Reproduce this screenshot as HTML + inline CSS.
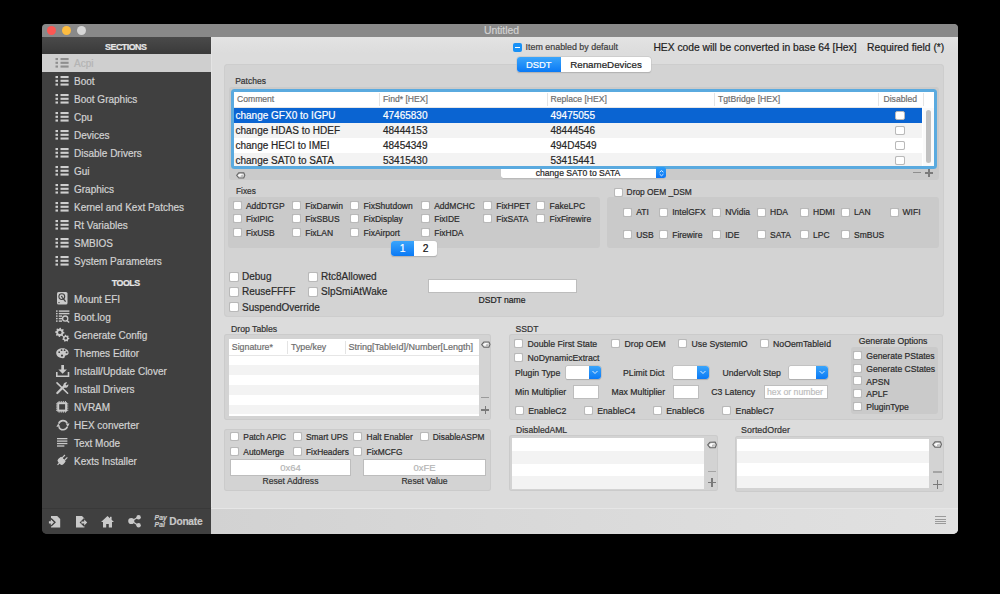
<!DOCTYPE html><html><head><meta charset="utf-8"><style>
*{margin:0;padding:0;box-sizing:content-box}
html,body{width:1000px;height:594px;background:#000;overflow:hidden;position:relative;font-family:"Liberation Sans",sans-serif}
body div{position:absolute}
.t{white-space:nowrap;font-family:"Liberation Sans",sans-serif;-webkit-text-stroke:0.2px currentColor}
.cb{background:#fff;border:1px solid #b9b9b9;border-radius:2px;box-shadow:0 0 0.5px rgba(0,0,0,.2)}
</style></head><body><div style="left:42px;top:24px;width:916px;height:510px;background:linear-gradient(to right,#404040 0,#404040 168px,#dcdcdc 168px);border-radius:5px;overflow:hidden"></div>
<div style="left:42px;top:24px;width:916px;height:13.4px;background:#898989;border-radius:0px;border-radius:4px 4px 0 0"></div>
<div style="left:47.2px;top:26.2px;width:9px;height:9px;border-radius:50%;background:#fc5753"></div>
<div style="left:62.2px;top:26.2px;width:9px;height:9px;border-radius:50%;background:#fdbc40"></div>
<div style="left:77.2px;top:26.2px;width:9px;height:9px;border-radius:50%;background:#d6d6d6"></div>
<div class="t" style="left:351.5px;top:24.3px;width:300px;text-align:center;line-height:14px;font-size:10.4px;color:#d2d2d2;font-weight:400;">Untitled</div>
<div style="left:42px;top:37px;width:168.7px;height:497px;background:#404040;border-radius:0px;border-radius:0 0 0 5px"></div>
<div style="left:42px;top:37.2px;width:168.7px;height:16.8px;background:linear-gradient(#4a4a4a,#3a3a3a);border-radius:0px;border-radius:3px 0 0 0"></div>
<div class="t" style="left:-24.25px;top:40.1px;width:300px;text-align:center;line-height:14px;font-size:8.9px;color:#e6e6e6;font-weight:700;letter-spacing:-0.5px">SECTIONS</div>
<div style="left:42px;top:54px;width:168.7px;height:18px;background:#cfcfcf;border-radius:0px;"></div>
<svg style="position:absolute;left:55.3px;top:58.1px" width="14" height="10"><rect x="0.5" y="0.0" width="2.5" height="2.1" fill="#8e8e8e"/><rect x="5.5" y="0.0" width="8.1" height="2.1" fill="#8e8e8e"/><rect x="0.5" y="3.75" width="2.5" height="2.1" fill="#8e8e8e"/><rect x="5.5" y="3.75" width="8.1" height="2.1" fill="#8e8e8e"/><rect x="0.5" y="7.5" width="2.5" height="2.1" fill="#8e8e8e"/><rect x="5.5" y="7.5" width="8.1" height="2.1" fill="#8e8e8e"/></svg>
<div class="t" style="left:74px;top:56.8px;line-height:14px;font-size:10px;color:#b4b4b4;font-weight:400;">Acpi</div>
<svg style="position:absolute;left:55.3px;top:76.1px" width="14" height="10"><rect x="0.5" y="0.0" width="2.5" height="2.1" fill="#cfcfcf"/><rect x="5.5" y="0.0" width="8.1" height="2.1" fill="#cfcfcf"/><rect x="0.5" y="3.75" width="2.5" height="2.1" fill="#cfcfcf"/><rect x="5.5" y="3.75" width="8.1" height="2.1" fill="#cfcfcf"/><rect x="0.5" y="7.5" width="2.5" height="2.1" fill="#cfcfcf"/><rect x="5.5" y="7.5" width="8.1" height="2.1" fill="#cfcfcf"/></svg>
<div class="t" style="left:74px;top:74.8px;line-height:14px;font-size:10px;color:#d2d2d2;font-weight:400;">Boot</div>
<svg style="position:absolute;left:55.3px;top:94.1px" width="14" height="10"><rect x="0.5" y="0.0" width="2.5" height="2.1" fill="#cfcfcf"/><rect x="5.5" y="0.0" width="8.1" height="2.1" fill="#cfcfcf"/><rect x="0.5" y="3.75" width="2.5" height="2.1" fill="#cfcfcf"/><rect x="5.5" y="3.75" width="8.1" height="2.1" fill="#cfcfcf"/><rect x="0.5" y="7.5" width="2.5" height="2.1" fill="#cfcfcf"/><rect x="5.5" y="7.5" width="8.1" height="2.1" fill="#cfcfcf"/></svg>
<div class="t" style="left:74px;top:92.8px;line-height:14px;font-size:10px;color:#d2d2d2;font-weight:400;">Boot Graphics</div>
<svg style="position:absolute;left:55.3px;top:112.1px" width="14" height="10"><rect x="0.5" y="0.0" width="2.5" height="2.1" fill="#cfcfcf"/><rect x="5.5" y="0.0" width="8.1" height="2.1" fill="#cfcfcf"/><rect x="0.5" y="3.75" width="2.5" height="2.1" fill="#cfcfcf"/><rect x="5.5" y="3.75" width="8.1" height="2.1" fill="#cfcfcf"/><rect x="0.5" y="7.5" width="2.5" height="2.1" fill="#cfcfcf"/><rect x="5.5" y="7.5" width="8.1" height="2.1" fill="#cfcfcf"/></svg>
<div class="t" style="left:74px;top:110.8px;line-height:14px;font-size:10px;color:#d2d2d2;font-weight:400;">Cpu</div>
<svg style="position:absolute;left:55.3px;top:130.1px" width="14" height="10"><rect x="0.5" y="0.0" width="2.5" height="2.1" fill="#cfcfcf"/><rect x="5.5" y="0.0" width="8.1" height="2.1" fill="#cfcfcf"/><rect x="0.5" y="3.75" width="2.5" height="2.1" fill="#cfcfcf"/><rect x="5.5" y="3.75" width="8.1" height="2.1" fill="#cfcfcf"/><rect x="0.5" y="7.5" width="2.5" height="2.1" fill="#cfcfcf"/><rect x="5.5" y="7.5" width="8.1" height="2.1" fill="#cfcfcf"/></svg>
<div class="t" style="left:74px;top:128.8px;line-height:14px;font-size:10px;color:#d2d2d2;font-weight:400;">Devices</div>
<svg style="position:absolute;left:55.3px;top:148.1px" width="14" height="10"><rect x="0.5" y="0.0" width="2.5" height="2.1" fill="#cfcfcf"/><rect x="5.5" y="0.0" width="8.1" height="2.1" fill="#cfcfcf"/><rect x="0.5" y="3.75" width="2.5" height="2.1" fill="#cfcfcf"/><rect x="5.5" y="3.75" width="8.1" height="2.1" fill="#cfcfcf"/><rect x="0.5" y="7.5" width="2.5" height="2.1" fill="#cfcfcf"/><rect x="5.5" y="7.5" width="8.1" height="2.1" fill="#cfcfcf"/></svg>
<div class="t" style="left:74px;top:146.8px;line-height:14px;font-size:10px;color:#d2d2d2;font-weight:400;">Disable Drivers</div>
<svg style="position:absolute;left:55.3px;top:166.1px" width="14" height="10"><rect x="0.5" y="0.0" width="2.5" height="2.1" fill="#cfcfcf"/><rect x="5.5" y="0.0" width="8.1" height="2.1" fill="#cfcfcf"/><rect x="0.5" y="3.75" width="2.5" height="2.1" fill="#cfcfcf"/><rect x="5.5" y="3.75" width="8.1" height="2.1" fill="#cfcfcf"/><rect x="0.5" y="7.5" width="2.5" height="2.1" fill="#cfcfcf"/><rect x="5.5" y="7.5" width="8.1" height="2.1" fill="#cfcfcf"/></svg>
<div class="t" style="left:74px;top:164.8px;line-height:14px;font-size:10px;color:#d2d2d2;font-weight:400;">Gui</div>
<svg style="position:absolute;left:55.3px;top:184.1px" width="14" height="10"><rect x="0.5" y="0.0" width="2.5" height="2.1" fill="#cfcfcf"/><rect x="5.5" y="0.0" width="8.1" height="2.1" fill="#cfcfcf"/><rect x="0.5" y="3.75" width="2.5" height="2.1" fill="#cfcfcf"/><rect x="5.5" y="3.75" width="8.1" height="2.1" fill="#cfcfcf"/><rect x="0.5" y="7.5" width="2.5" height="2.1" fill="#cfcfcf"/><rect x="5.5" y="7.5" width="8.1" height="2.1" fill="#cfcfcf"/></svg>
<div class="t" style="left:74px;top:182.8px;line-height:14px;font-size:10px;color:#d2d2d2;font-weight:400;">Graphics</div>
<svg style="position:absolute;left:55.3px;top:202.1px" width="14" height="10"><rect x="0.5" y="0.0" width="2.5" height="2.1" fill="#cfcfcf"/><rect x="5.5" y="0.0" width="8.1" height="2.1" fill="#cfcfcf"/><rect x="0.5" y="3.75" width="2.5" height="2.1" fill="#cfcfcf"/><rect x="5.5" y="3.75" width="8.1" height="2.1" fill="#cfcfcf"/><rect x="0.5" y="7.5" width="2.5" height="2.1" fill="#cfcfcf"/><rect x="5.5" y="7.5" width="8.1" height="2.1" fill="#cfcfcf"/></svg>
<div class="t" style="left:74px;top:200.8px;line-height:14px;font-size:10px;color:#d2d2d2;font-weight:400;">Kernel and Kext Patches</div>
<svg style="position:absolute;left:55.3px;top:220.1px" width="14" height="10"><rect x="0.5" y="0.0" width="2.5" height="2.1" fill="#cfcfcf"/><rect x="5.5" y="0.0" width="8.1" height="2.1" fill="#cfcfcf"/><rect x="0.5" y="3.75" width="2.5" height="2.1" fill="#cfcfcf"/><rect x="5.5" y="3.75" width="8.1" height="2.1" fill="#cfcfcf"/><rect x="0.5" y="7.5" width="2.5" height="2.1" fill="#cfcfcf"/><rect x="5.5" y="7.5" width="8.1" height="2.1" fill="#cfcfcf"/></svg>
<div class="t" style="left:74px;top:218.8px;line-height:14px;font-size:10px;color:#d2d2d2;font-weight:400;">Rt Variables</div>
<svg style="position:absolute;left:55.3px;top:238.1px" width="14" height="10"><rect x="0.5" y="0.0" width="2.5" height="2.1" fill="#cfcfcf"/><rect x="5.5" y="0.0" width="8.1" height="2.1" fill="#cfcfcf"/><rect x="0.5" y="3.75" width="2.5" height="2.1" fill="#cfcfcf"/><rect x="5.5" y="3.75" width="8.1" height="2.1" fill="#cfcfcf"/><rect x="0.5" y="7.5" width="2.5" height="2.1" fill="#cfcfcf"/><rect x="5.5" y="7.5" width="8.1" height="2.1" fill="#cfcfcf"/></svg>
<div class="t" style="left:74px;top:236.8px;line-height:14px;font-size:10px;color:#d2d2d2;font-weight:400;">SMBIOS</div>
<svg style="position:absolute;left:55.3px;top:256.1px" width="14" height="10"><rect x="0.5" y="0.0" width="2.5" height="2.1" fill="#cfcfcf"/><rect x="5.5" y="0.0" width="8.1" height="2.1" fill="#cfcfcf"/><rect x="0.5" y="3.75" width="2.5" height="2.1" fill="#cfcfcf"/><rect x="5.5" y="3.75" width="8.1" height="2.1" fill="#cfcfcf"/><rect x="0.5" y="7.5" width="2.5" height="2.1" fill="#cfcfcf"/><rect x="5.5" y="7.5" width="8.1" height="2.1" fill="#cfcfcf"/></svg>
<div class="t" style="left:74px;top:254.8px;line-height:14px;font-size:10px;color:#d2d2d2;font-weight:400;">System Parameters</div>
<div class="t" style="left:-24.25px;top:276.4px;width:300px;text-align:center;line-height:14px;font-size:8.9px;color:#e6e6e6;font-weight:700;letter-spacing:-0.5px">TOOLS</div>
<div class="t" style="left:74px;top:292.6px;line-height:14px;font-size:10px;color:#d2d2d2;font-weight:400;">Mount EFI</div>
<div class="t" style="left:74px;top:310.65px;line-height:14px;font-size:10px;color:#d2d2d2;font-weight:400;">Boot.log</div>
<div class="t" style="left:74px;top:328.7px;line-height:14px;font-size:10px;color:#d2d2d2;font-weight:400;">Generate Config</div>
<div class="t" style="left:74px;top:346.75px;line-height:14px;font-size:10px;color:#d2d2d2;font-weight:400;">Themes Editor</div>
<div class="t" style="left:74px;top:364.8px;line-height:14px;font-size:10px;color:#d2d2d2;font-weight:400;">Install/Update Clover</div>
<div class="t" style="left:74px;top:382.85px;line-height:14px;font-size:10px;color:#d2d2d2;font-weight:400;">Install Drivers</div>
<div class="t" style="left:74px;top:400.9px;line-height:14px;font-size:10px;color:#d2d2d2;font-weight:400;">NVRAM</div>
<div class="t" style="left:74px;top:418.95px;line-height:14px;font-size:10px;color:#d2d2d2;font-weight:400;">HEX converter</div>
<div class="t" style="left:74px;top:437.0px;line-height:14px;font-size:10px;color:#d2d2d2;font-weight:400;">Text Mode</div>
<div class="t" style="left:74px;top:455.05px;line-height:14px;font-size:10px;color:#d2d2d2;font-weight:400;">Kexts Installer</div>
<svg style="position:absolute;left:56.9px;top:292.2px;overflow:visible" width="10.5" height="12.5" viewBox="0 0 10.5 12.5"><rect x="0" y="0" width="10.5" height="12.5" rx="1.6" fill="#c9c9c9"/><circle cx="4.8" cy="4.6" r="2.9" fill="none" stroke="#404040" stroke-width="1.1"/><circle cx="4.8" cy="4.6" r="0.8" fill="#404040"/><path d="M5.2 5.4 L8.6 9.6" stroke="#404040" stroke-width="1.3"/><rect x="1.3" y="10.2" width="1.4" height="0.9" fill="#404040"/></svg>
<svg style="position:absolute;left:55.6px;top:309.8px;overflow:visible" width="13.4" height="12.5" viewBox="0 0 13.4 12.5"><rect x="0" y="0.4" width="1.6" height="1.4" fill="#c9c9c9"/><rect x="2.8" y="0.4" width="10.6" height="1.4" fill="#c9c9c9"/><rect x="0" y="2.9" width="1.6" height="1.4" fill="#c9c9c9"/><rect x="2.8" y="2.9" width="10.6" height="1.4" fill="#c9c9c9"/><rect x="0" y="5.4" width="1.6" height="1.4" fill="#c9c9c9"/><rect x="2.8" y="5.4" width="3.2" height="1.4" fill="#c9c9c9"/><rect x="0" y="7.9" width="1.6" height="1.4" fill="#c9c9c9"/><rect x="2.8" y="7.9" width="3.2" height="1.4" fill="#c9c9c9"/><rect x="0" y="10.4" width="1.6" height="1.4" fill="#c9c9c9"/><rect x="2.8" y="10.4" width="3.2" height="1.4" fill="#c9c9c9"/><circle cx="9.2" cy="8.6" r="2.6" fill="none" stroke="#c9c9c9" stroke-width="1.3"/><path d="M11 10.5 L13.2 12.5" stroke="#c9c9c9" stroke-width="1.5"/></svg>
<svg style="position:absolute;left:55px;top:327.6px;overflow:visible" width="14" height="14" viewBox="0 0 14 14"><polygon points="9.50,4.40 9.41,5.32 8.13,5.78 7.79,6.40 8.12,7.72 7.41,8.31 6.18,7.73 5.50,7.93 4.80,9.10 3.88,9.01 3.42,7.73 2.80,7.39 1.48,7.72 0.89,7.01 1.47,5.78 1.27,5.10 0.10,4.40 0.19,3.48 1.47,3.02 1.81,2.40 1.48,1.08 2.19,0.49 3.42,1.07 4.10,0.87 4.80,-0.30 5.72,-0.21 6.18,1.07 6.80,1.41 8.12,1.08 8.71,1.79 8.13,3.02 8.33,3.70" fill="#c9c9c9"/><circle cx="4.8" cy="4.4" r="1.7" fill="#404040"/><polygon points="14.40,10.30 14.31,11.10 13.23,11.47 12.91,11.98 13.04,13.11 12.36,13.54 11.40,12.93 10.80,13.00 10.00,13.81 9.24,13.54 9.12,12.41 8.69,11.98 7.56,11.86 7.29,11.10 8.10,10.30 8.17,9.70 7.56,8.74 7.99,8.06 9.12,8.19 9.63,7.87 10.00,6.79 10.80,6.70 11.40,7.67 11.97,7.87 13.04,7.49 13.61,8.06 13.23,9.13 13.43,9.70" fill="#c9c9c9"/><circle cx="10.8" cy="10.3" r="1.2" fill="#404040"/></svg>
<svg style="position:absolute;left:55.7px;top:347.6px;overflow:visible" width="12.8" height="10.2" viewBox="0 0 12.8 10.2"><path d="M6.6 0.2 C10.6 0.2 12.8 2.6 12.6 5 C12.4 7.4 10 7 9.2 7.8 C8.4 8.6 9.4 10 7.2 10.2 C3.4 10.4 0.2 8 0.2 5 C0.2 2.2 3 0.2 6.6 0.2 Z" fill="#c9c9c9"/><circle cx="3.2" cy="4.2" r="0.9" fill="#404040"/><circle cx="5.6" cy="2.2" r="0.9" fill="#404040"/><circle cx="8.6" cy="2.2" r="0.9" fill="#404040"/><circle cx="10.6" cy="4.4" r="0.9" fill="#404040"/><circle cx="6" cy="7.6" r="1.1" fill="#404040"/></svg>
<svg style="position:absolute;left:55.7px;top:364.8px;overflow:visible" width="13.3" height="12" viewBox="0 0 13.3 12"><rect x="5.3" y="0" width="2.7" height="5" fill="#c9c9c9"/><path d="M2.4 4.4 L10.9 4.4 L6.65 8.8 Z" fill="#c9c9c9"/><path d="M0.8 7 L0.8 11.2 L12.5 11.2 L12.5 7" fill="none" stroke="#c9c9c9" stroke-width="1.6"/></svg>
<svg style="position:absolute;left:55.7px;top:382.4px;overflow:visible" width="12.8" height="12" viewBox="0 0 12.8 12"><path d="M1 0.9 L11.6 11.2" stroke="#c9c9c9" stroke-width="1.6" stroke-linecap="round"/><path d="M1.3 11 L8 4.4" stroke="#c9c9c9" stroke-width="2.2" stroke-linecap="round"/><path d="M8.2 5.6 A3.1 3.1 0 0 1 11.2 0.4 L9.6 2.4 L10.4 3.6 L12.4 2.2 A3.1 3.1 0 0 1 8.2 5.6 Z" fill="#c9c9c9"/></svg>
<svg style="position:absolute;left:56.1px;top:400.7px;overflow:visible" width="12.3" height="11.7" viewBox="0 0 12.3 11.7"><rect x="2.2" y="2.2" width="7.9" height="7.4" fill="none" stroke="#c9c9c9" stroke-width="2"/><rect x="2.6" y="0" width="1" height="1.6" fill="#c9c9c9"/><rect x="2.6" y="10.1" width="1" height="1.6" fill="#c9c9c9"/><rect x="0" y="2.4" width="1.6" height="1" fill="#c9c9c9"/><rect x="10.7" y="2.4" width="1.6" height="1" fill="#c9c9c9"/><rect x="4.7" y="0" width="1" height="1.6" fill="#c9c9c9"/><rect x="4.7" y="10.1" width="1" height="1.6" fill="#c9c9c9"/><rect x="0" y="4.5" width="1.6" height="1" fill="#c9c9c9"/><rect x="10.7" y="4.5" width="1.6" height="1" fill="#c9c9c9"/><rect x="6.800000000000001" y="0" width="1" height="1.6" fill="#c9c9c9"/><rect x="6.800000000000001" y="10.1" width="1" height="1.6" fill="#c9c9c9"/><rect x="0" y="6.6000000000000005" width="1.6" height="1" fill="#c9c9c9"/><rect x="10.7" y="6.6000000000000005" width="1.6" height="1" fill="#c9c9c9"/><rect x="8.9" y="0" width="1" height="1.6" fill="#c9c9c9"/><rect x="8.9" y="10.1" width="1" height="1.6" fill="#c9c9c9"/><rect x="0" y="8.700000000000001" width="1.6" height="1" fill="#c9c9c9"/><rect x="10.7" y="8.700000000000001" width="1.6" height="1" fill="#c9c9c9"/></svg>
<svg style="position:absolute;left:55.5px;top:418.5px;overflow:visible" width="14" height="12.3" viewBox="0 0 14 12.3"><path d="M2.68 4.63 A4.6 4.6 0 0 1 11.17 4.26" fill="none" stroke="#c9c9c9" stroke-width="1.6"/><path d="M11.32 7.77 A4.6 4.6 0 0 1 2.83 8.14" fill="none" stroke="#c9c9c9" stroke-width="1.6"/><path d="M9.8 4.6 L13.6 4.6 L11.7 8 Z" fill="#c9c9c9"/><path d="M0.4 7.8 L4.2 7.8 L2.3 4.4 Z" fill="#c9c9c9"/></svg>
<svg style="position:absolute;left:57.2px;top:438.4px;overflow:visible" width="10.4" height="8.4" viewBox="0 0 10.4 8.4"><rect x="0" y="0.0" width="10.4" height="1.3" fill="#c9c9c9"/><rect x="0" y="2.45" width="10.4" height="1.3" fill="#c9c9c9"/><rect x="0" y="4.9" width="10.4" height="1.3" fill="#c9c9c9"/><rect x="0" y="7.3500000000000005" width="7.4" height="1.3" fill="#c9c9c9"/></svg>
<svg style="position:absolute;left:56.1px;top:454.2px;overflow:visible" width="12.4" height="12.4" viewBox="0 0 12.4 12.4"><g transform="rotate(45 6.2 6.2)"><rect x="2.6" y="4.4" width="7.2" height="6" rx="2.2" fill="#c9c9c9"/><rect x="3" y="4.4" width="6.4" height="2.2" fill="#c9c9c9"/><rect x="3.9" y="0.6" width="1.2" height="4" fill="#c9c9c9"/><rect x="7.3" y="0.6" width="1.2" height="4" fill="#c9c9c9"/><rect x="5.6" y="10" width="1.2" height="2.8" fill="#c9c9c9"/></g></svg>
<svg style="position:absolute;left:48px;top:515px;overflow:visible" width="13" height="13" viewBox="0 0 13 13"><path d="M3 1 L9.2 1 L12.2 4 L12.2 12.4 L3 12.4 Z" fill="#c9c9c9"/><path d="M3 3.6 L6.8 7.3 L3 11" stroke="#404040" stroke-width="1.6" fill="none"/><path d="M2.8 4.4 L5.8 7.3 L2.8 10.2 L2.8 8.4 L0.9 8.4 L0.9 6.2 L2.8 6.2 Z" fill="#c9c9c9"/></svg>
<svg style="position:absolute;left:75.5px;top:515px;overflow:visible" width="12" height="13" viewBox="0 0 12 13"><path d="M0 1 L6 1 L8.4 3.4 L8.4 12.4 L0 12.4 Z" fill="#c9c9c9"/><path d="M4.6 7.4 L8 4 L11.4 7.4 L8 10.8 Z" fill="#404040" stroke="#404040" stroke-width="1.4"/><path d="M5.4 6.4 L8.2 6.4 L8.2 4.4 L11.2 7.4 L8.2 10.4 L8.2 8.4 L5.4 8.4 Z" fill="#c9c9c9"/></svg>
<svg style="position:absolute;left:101px;top:515.5px;overflow:visible" width="13" height="11.5" viewBox="0 0 13 11.5"><path d="M6.5 0 L13 6 L11 6 L11 11.5 L7.8 11.5 L7.8 8 L5.2 8 L5.2 11.5 L2 11.5 L2 6 L0 6 Z" fill="#c9c9c9"/><rect x="9" y="0.8" width="1.6" height="3" fill="#c9c9c9"/></svg>
<svg style="position:absolute;left:128px;top:515px;overflow:visible" width="13" height="12" viewBox="0 0 13 12"><path d="M3.5 6 L10.5 2 M3.5 6 L10.5 10.5" stroke="#c9c9c9" stroke-width="1.3"/><circle cx="3.3" cy="6" r="3.1" fill="#c9c9c9"/><circle cx="10.6" cy="2.2" r="2.2" fill="#c9c9c9"/><circle cx="10.6" cy="10.2" r="2.2" fill="#c9c9c9"/></svg>
<div class="t" style="left:154.6px;top:514.3px;line-height:8px;font-size:6.8px;color:#c9c9c9;font-weight:700;font-style:italic">Pay</div>
<div class="t" style="left:154.6px;top:521.0px;line-height:8px;font-size:6.8px;color:#c9c9c9;font-weight:700;font-style:italic">Pal</div>
<div style="left:42px;top:507.5px;width:168.7px;height:1.0px;background:#393939;border-radius:0px;"></div>
<div class="t" style="left:169.3px;top:515.4px;line-height:14px;font-size:10.2px;color:#c8c8c8;font-weight:700;letter-spacing:-0.25px">Donate</div>
<div style="left:210.7px;top:37.2px;width:747.3px;height:470.3px;background:linear-gradient(#e3e3e3 0,#dcdcdc 16px,#dcdcdc);border-radius:0px;"></div>
<div style="left:210.7px;top:37.2px;width:1.3px;height:470.3px;background:#e4e4e4;border-radius:0px;"></div>
<div style="left:210.7px;top:507.5px;width:747.3px;height:26.5px;background:linear-gradient(to right,#d2d2d2,#dadada 50%,#e1e1e1);border-radius:0px;border-radius:0 0 5px 0"></div>
<div style="left:210.7px;top:507.6px;width:747.3px;height:1.2px;background:#e6e6e6;border-radius:0px;"></div>
<div style="left:513px;top:43px;width:8.6px;height:8.6px;border-radius:2px;background:#1891f6"></div>
<div style="left:515px;top:46.8px;width:4.6px;height:1.2px;background:#fff;border-radius:0px;"></div>
<div class="t" style="left:525.6px;top:40.3px;line-height:14px;font-size:8.9px;color:#3d3d3d;font-weight:400;">Item enabled by default</div>
<div class="t" style="left:653.4px;top:40.6px;line-height:14px;font-size:10.3px;color:#222;font-weight:400;">HEX code will be converted in base 64 [Hex]</div>
<div class="t" style="left:867px;top:40.6px;line-height:14px;font-size:10.3px;color:#222;font-weight:400;">Required field (*)</div>
<div style="left:224px;top:64px;width:720px;height:252.5px;background:#d3d3d3;border-radius:4px;box-shadow:inset 0 0 0 1px #cdcdcd"></div>
<div style="left:516.6px;top:57.4px;width:134.4px;height:15px;border-radius:3px;background:#fff;box-shadow:0 0 0 0.5px #c4c4c4,0 0.5px 1px rgba(0,0,0,.25);overflow:hidden"></div>
<div style="left:516.6px;top:57.4px;width:44.4px;height:15px;border-radius:3px 0 0 3px;background:linear-gradient(#3aa5fb,#0a79f5)"></div>
<div class="t" style="left:388.8px;top:58.0px;width:300px;text-align:center;line-height:14px;font-size:9.4px;color:#fff;font-weight:400;">DSDT</div>
<div class="t" style="left:456.0px;top:58.0px;width:300px;text-align:center;line-height:14px;font-size:9.75px;color:#222;font-weight:400;">RenameDevices</div>
<div class="t" style="left:235.2px;top:73.8px;line-height:14px;font-size:8.5px;color:#333;font-weight:400;">Patches</div>
<div style="left:228.6px;top:86.5px;width:710.3px;height:93.0px;background:#cacaca;border-radius:3px;"></div>
<div style="left:230.5px;top:88.8px;width:706.2px;height:80.6px;background:#5aaadf;border-radius:3.5px;"></div>
<div style="left:233.7px;top:91.5px;width:700.3px;height:74.2px;background:#fff;border-radius:0px;"></div>
<div style="left:379.25px;top:93px;width:1.0px;height:13px;background:#e4e4e4;border-radius:0px;"></div>
<div style="left:546.75px;top:93px;width:1.0px;height:13px;background:#e4e4e4;border-radius:0px;"></div>
<div style="left:714.25px;top:93px;width:1.0px;height:13px;background:#e4e4e4;border-radius:0px;"></div>
<div style="left:878px;top:93px;width:1px;height:13px;background:#e4e4e4;border-radius:0px;"></div>
<div style="left:922.5px;top:93px;width:1.0px;height:13px;background:#e4e4e4;border-radius:0px;"></div>
<div style="left:233.7px;top:106.8px;width:688.8px;height:0.7px;background:#e6e6e6;border-radius:0px;"></div>
<div class="t" style="left:237px;top:91.9px;line-height:14px;font-size:8.6px;color:#6e6e6e;font-weight:400;">Comment</div>
<div class="t" style="left:383px;top:91.9px;line-height:14px;font-size:8.6px;color:#6e6e6e;font-weight:400;">Find* [HEX]</div>
<div class="t" style="left:550.5px;top:91.9px;line-height:14px;font-size:8.6px;color:#6e6e6e;font-weight:400;">Replace [HEX]</div>
<div class="t" style="left:718px;top:91.9px;line-height:14px;font-size:8.6px;color:#6e6e6e;font-weight:400;">TgtBridge [HEX]</div>
<div class="t" style="left:883.5px;top:91.9px;line-height:14px;font-size:8.6px;color:#6e6e6e;font-weight:400;">Disabled</div>
<div style="left:233.7px;top:107.5px;width:688.8px;height:15.0px;background:#0a64d2;border-radius:0px;"></div>
<div class="t" style="left:235.5px;top:109.3px;line-height:14px;font-size:10px;color:#fff;font-weight:400;">change GFX0 to IGPU</div>
<div class="t" style="left:383px;top:109.3px;line-height:14px;font-size:10px;color:#fff;font-weight:400;">47465830</div>
<div class="t" style="left:550.5px;top:109.3px;line-height:14px;font-size:10px;color:#fff;font-weight:400;">49475055</div>
<div class="cb" style="left:895.2px;top:110.8px;width:7.7px;height:7.7px;border-radius:2px"></div>
<div style="left:233.7px;top:122.5px;width:688.8px;height:15.0px;background:#f3f3f3;border-radius:0px;"></div>
<div class="t" style="left:235.5px;top:124.3px;line-height:14px;font-size:10px;color:#262626;font-weight:400;">change HDAS to HDEF</div>
<div class="t" style="left:383px;top:124.3px;line-height:14px;font-size:10px;color:#262626;font-weight:400;">48444153</div>
<div class="t" style="left:550.5px;top:124.3px;line-height:14px;font-size:10px;color:#262626;font-weight:400;">48444546</div>
<div class="cb" style="left:895.2px;top:125.8px;width:7.7px;height:7.7px;border-radius:2px"></div>
<div style="left:233.7px;top:137.5px;width:688.8px;height:15.0px;background:#fff;border-radius:0px;"></div>
<div class="t" style="left:235.5px;top:139.3px;line-height:14px;font-size:10px;color:#262626;font-weight:400;">change HECI to IMEI</div>
<div class="t" style="left:383px;top:139.3px;line-height:14px;font-size:10px;color:#262626;font-weight:400;">48454349</div>
<div class="t" style="left:550.5px;top:139.3px;line-height:14px;font-size:10px;color:#262626;font-weight:400;">494D4549</div>
<div class="cb" style="left:895.2px;top:140.8px;width:7.7px;height:7.7px;border-radius:2px"></div>
<div style="left:233.7px;top:152.5px;width:688.8px;height:13.2px;background:#f3f3f3;border-radius:0px;"></div>
<div class="t" style="left:235.5px;top:154.3px;line-height:14px;font-size:10px;color:#262626;font-weight:400;">change SAT0 to SATA</div>
<div class="t" style="left:383px;top:154.3px;line-height:14px;font-size:10px;color:#262626;font-weight:400;">53415430</div>
<div class="t" style="left:550.5px;top:154.3px;line-height:14px;font-size:10px;color:#262626;font-weight:400;">53415441</div>
<div class="cb" style="left:895.2px;top:155.8px;width:7.7px;height:7.7px;border-radius:2px"></div>
<div style="left:922.5px;top:107.5px;width:11.2px;height:58.2px;background:#fafafa;border-radius:0px;"></div>
<div style="left:926px;top:110px;width:5px;height:52.5px;background:#c1c1c1;border-radius:2.5px;"></div>
<div style="left:501px;top:169.4px;width:164.5px;height:8.8px;border-radius:0 0 2.5px 2.5px;background:#fff;box-shadow:0 0.6px 0.6px #aaa"></div>
<div style="left:656px;top:167px;width:9.9px;height:11.4px;border-radius:0 2.5px 2.5px 0;background:linear-gradient(#2e9ff8,#0a74f5)"></div>
<svg style="position:absolute;left:658.6px;top:169.6px;overflow:visible" width="5" height="6.4" viewBox="0 0 5 6.4"><path d="M0.6 2.2 L2.5 0.6 L4.4 2.2 M0.6 4.2 L2.5 5.8 L4.4 4.2" stroke="#e8f2ff" stroke-width="0.9" fill="none"/></svg>
<div class="t" style="left:428.0px;top:165.8px;width:300px;text-align:center;line-height:14px;font-size:8.6px;color:#262626;font-weight:400;">change SAT0 to SATA</div>
<div class="t" style="left:236px;top:184.2px;line-height:14px;font-size:8.3px;color:#333;font-weight:400;">Fixes</div>
<div style="left:228px;top:197.4px;width:371.6px;height:50.6px;background:#cacaca;border-radius:3px;"></div>
<div class="cb" style="left:232.7px;top:200.9px;width:7px;height:7px"></div>
<div class="t" style="left:245.9px;top:199.0px;line-height:14px;font-size:8.5px;color:#2b2b2b;font-weight:400;">AddDTGP</div>
<div class="cb" style="left:232.7px;top:214.3px;width:7px;height:7px"></div>
<div class="t" style="left:245.9px;top:212.4px;line-height:14px;font-size:8.5px;color:#2b2b2b;font-weight:400;">FixIPIC</div>
<div class="cb" style="left:232.7px;top:227.7px;width:7px;height:7px"></div>
<div class="t" style="left:245.9px;top:225.8px;line-height:14px;font-size:8.5px;color:#2b2b2b;font-weight:400;">FixUSB</div>
<div class="cb" style="left:292.0px;top:200.9px;width:7px;height:7px"></div>
<div class="t" style="left:305.2px;top:199.0px;line-height:14px;font-size:8.5px;color:#2b2b2b;font-weight:400;">FixDarwin</div>
<div class="cb" style="left:292.0px;top:214.3px;width:7px;height:7px"></div>
<div class="t" style="left:305.2px;top:212.4px;line-height:14px;font-size:8.5px;color:#2b2b2b;font-weight:400;">FixSBUS</div>
<div class="cb" style="left:292.0px;top:227.7px;width:7px;height:7px"></div>
<div class="t" style="left:305.2px;top:225.8px;line-height:14px;font-size:8.5px;color:#2b2b2b;font-weight:400;">FixLAN</div>
<div class="cb" style="left:350.4px;top:200.9px;width:7px;height:7px"></div>
<div class="t" style="left:363.6px;top:199.0px;line-height:14px;font-size:8.5px;color:#2b2b2b;font-weight:400;">FixShutdown</div>
<div class="cb" style="left:350.4px;top:214.3px;width:7px;height:7px"></div>
<div class="t" style="left:363.6px;top:212.4px;line-height:14px;font-size:8.5px;color:#2b2b2b;font-weight:400;">FixDisplay</div>
<div class="cb" style="left:350.4px;top:227.7px;width:7px;height:7px"></div>
<div class="t" style="left:363.6px;top:225.8px;line-height:14px;font-size:8.5px;color:#2b2b2b;font-weight:400;">FixAirport</div>
<div class="cb" style="left:421.0px;top:200.9px;width:7px;height:7px"></div>
<div class="t" style="left:434.2px;top:199.0px;line-height:14px;font-size:8.5px;color:#2b2b2b;font-weight:400;">AddMCHC</div>
<div class="cb" style="left:421.0px;top:214.3px;width:7px;height:7px"></div>
<div class="t" style="left:434.2px;top:212.4px;line-height:14px;font-size:8.5px;color:#2b2b2b;font-weight:400;">FixIDE</div>
<div class="cb" style="left:421.0px;top:227.7px;width:7px;height:7px"></div>
<div class="t" style="left:434.2px;top:225.8px;line-height:14px;font-size:8.5px;color:#2b2b2b;font-weight:400;">FixHDA</div>
<div class="cb" style="left:483.0px;top:200.9px;width:7px;height:7px"></div>
<div class="t" style="left:496.2px;top:199.0px;line-height:14px;font-size:8.5px;color:#2b2b2b;font-weight:400;">FixHPET</div>
<div class="cb" style="left:483.0px;top:214.3px;width:7px;height:7px"></div>
<div class="t" style="left:496.2px;top:212.4px;line-height:14px;font-size:8.5px;color:#2b2b2b;font-weight:400;">FixSATA</div>
<div class="cb" style="left:536.4px;top:200.9px;width:7px;height:7px"></div>
<div class="t" style="left:549.6px;top:199.0px;line-height:14px;font-size:8.5px;color:#2b2b2b;font-weight:400;">FakeLPC</div>
<div class="cb" style="left:536.4px;top:214.3px;width:7px;height:7px"></div>
<div class="t" style="left:549.6px;top:212.4px;line-height:14px;font-size:8.5px;color:#2b2b2b;font-weight:400;">FixFirewire</div>
<div style="left:391.4px;top:241px;width:45.6px;height:15.4px;border-radius:3px;background:#fff;box-shadow:0 0 0 0.5px #c4c4c4,0 0.5px 1px rgba(0,0,0,.25)"></div>
<div style="left:391.4px;top:241px;width:22.6px;height:15.4px;border-radius:3px 0 0 3px;background:linear-gradient(#3aa5fb,#0a79f5)"></div>
<div class="t" style="left:252.7px;top:242.0px;width:300px;text-align:center;line-height:14px;font-size:10.3px;color:#fff;font-weight:400;">1</div>
<div class="t" style="left:275.5px;top:242.0px;width:300px;text-align:center;line-height:14px;font-size:10.3px;color:#111;font-weight:400;">2</div>
<div style="left:607px;top:197.2px;width:331.8px;height:50.5px;background:#cacaca;border-radius:3px;"></div>
<div class="cb" style="left:613.8px;top:187.5px;width:7px;height:7px"></div>
<div class="t" style="left:626.6px;top:184.8px;line-height:14px;font-size:8.4px;color:#2b2b2b;font-weight:400;">Drop OEM _DSM</div>
<div class="cb" style="left:623.2px;top:207.5px;width:7px;height:7px"></div>
<div class="t" style="left:636.2px;top:205.1px;line-height:14px;font-size:8.5px;color:#2b2b2b;font-weight:400;">ATI</div>
<div class="cb" style="left:659.2px;top:207.5px;width:7px;height:7px"></div>
<div class="t" style="left:672.2px;top:205.1px;line-height:14px;font-size:8.5px;color:#2b2b2b;font-weight:400;">IntelGFX</div>
<div class="cb" style="left:712.2px;top:207.5px;width:7px;height:7px"></div>
<div class="t" style="left:725.2px;top:205.1px;line-height:14px;font-size:8.5px;color:#2b2b2b;font-weight:400;">NVidia</div>
<div class="cb" style="left:757.0px;top:207.5px;width:7px;height:7px"></div>
<div class="t" style="left:770.0px;top:205.1px;line-height:14px;font-size:8.5px;color:#2b2b2b;font-weight:400;">HDA</div>
<div class="cb" style="left:800.1px;top:207.5px;width:7px;height:7px"></div>
<div class="t" style="left:813.1px;top:205.1px;line-height:14px;font-size:8.5px;color:#2b2b2b;font-weight:400;">HDMI</div>
<div class="cb" style="left:841.0px;top:207.5px;width:7px;height:7px"></div>
<div class="t" style="left:854.0px;top:205.1px;line-height:14px;font-size:8.5px;color:#2b2b2b;font-weight:400;">LAN</div>
<div class="cb" style="left:889.6px;top:207.5px;width:7px;height:7px"></div>
<div class="t" style="left:902.6px;top:205.1px;line-height:14px;font-size:8.5px;color:#2b2b2b;font-weight:400;">WIFI</div>
<div class="cb" style="left:623.2px;top:229.9px;width:7px;height:7px"></div>
<div class="t" style="left:636.2px;top:227.5px;line-height:14px;font-size:8.5px;color:#2b2b2b;font-weight:400;">USB</div>
<div class="cb" style="left:659.2px;top:229.9px;width:7px;height:7px"></div>
<div class="t" style="left:672.2px;top:227.5px;line-height:14px;font-size:8.5px;color:#2b2b2b;font-weight:400;">Firewire</div>
<div class="cb" style="left:712.2px;top:229.9px;width:7px;height:7px"></div>
<div class="t" style="left:725.2px;top:227.5px;line-height:14px;font-size:8.5px;color:#2b2b2b;font-weight:400;">IDE</div>
<div class="cb" style="left:757.0px;top:229.9px;width:7px;height:7px"></div>
<div class="t" style="left:770.0px;top:227.5px;line-height:14px;font-size:8.5px;color:#2b2b2b;font-weight:400;">SATA</div>
<div class="cb" style="left:800.1px;top:229.9px;width:7px;height:7px"></div>
<div class="t" style="left:813.1px;top:227.5px;line-height:14px;font-size:8.5px;color:#2b2b2b;font-weight:400;">LPC</div>
<div class="cb" style="left:841.0px;top:229.9px;width:7px;height:7px"></div>
<div class="t" style="left:854.0px;top:227.5px;line-height:14px;font-size:8.5px;color:#2b2b2b;font-weight:400;">SmBUS</div>
<div class="cb" style="left:228.6px;top:271.6px;width:8px;height:8px"></div>
<div class="t" style="left:242.0px;top:270.2px;line-height:14px;font-size:10px;color:#2b2b2b;font-weight:400;">Debug</div>
<div class="cb" style="left:228.6px;top:286.8px;width:8px;height:8px"></div>
<div class="t" style="left:242.0px;top:285.4px;line-height:14px;font-size:10px;color:#2b2b2b;font-weight:400;">ReuseFFFF</div>
<div class="cb" style="left:228.6px;top:302.0px;width:8px;height:8px"></div>
<div class="t" style="left:242.0px;top:300.6px;line-height:14px;font-size:10px;color:#2b2b2b;font-weight:400;">SuspendOverride</div>
<div class="cb" style="left:307.6px;top:271.6px;width:8px;height:8px"></div>
<div class="t" style="left:321.0px;top:270.2px;line-height:14px;font-size:10px;color:#2b2b2b;font-weight:400;">Rtc8Allowed</div>
<div class="cb" style="left:307.6px;top:286.8px;width:8px;height:8px"></div>
<div class="t" style="left:321.0px;top:285.4px;line-height:14px;font-size:10px;color:#2b2b2b;font-weight:400;">SlpSmiAtWake</div>
<div style="left:428.4px;top:279px;width:149.0px;height:14px;background:#fff;border-radius:0px;box-shadow:inset 0 0 0 1px #bdbdbd"></div>
<div class="t" style="left:352.0px;top:293.0px;width:300px;text-align:center;line-height:14px;font-size:8.6px;color:#222;font-weight:400;">DSDT name</div>
<div class="t" style="left:231px;top:321.6px;line-height:14px;font-size:8.7px;color:#333;font-weight:400;">Drop Tables</div>
<div style="left:224.3px;top:334px;width:266.7px;height:86.3px;background:#d3d3d3;border-radius:3px;box-shadow:inset 0 0 0 1px #cbcbcb"></div>
<div style="left:228.8px;top:338.8px;width:250.2px;height:76.8px;background:#fff;border-radius:0px;"></div>
<div style="left:228.8px;top:365.15px;width:250.2px;height:9.85px;background:#f3f3f3;border-radius:0px;"></div>
<div style="left:228.8px;top:384.85px;width:250.2px;height:9.85px;background:#f3f3f3;border-radius:0px;"></div>
<div style="left:228.8px;top:404.55px;width:250.2px;height:9.85px;background:#f3f3f3;border-radius:0px;"></div>
<div style="left:228.8px;top:354.8px;width:250.2px;height:0.6px;background:#e6e6e6;border-radius:0px;"></div>
<div style="left:287.2px;top:340.5px;width:1.0px;height:13.0px;background:#e4e4e4;border-radius:0px;"></div>
<div style="left:345px;top:340.5px;width:1px;height:13.0px;background:#e4e4e4;border-radius:0px;"></div>
<div class="t" style="left:231.8px;top:339.8px;line-height:14px;font-size:8.8px;color:#6e6e6e;font-weight:400;">Signature*</div>
<div class="t" style="left:291px;top:339.8px;line-height:14px;font-size:8.8px;color:#6e6e6e;font-weight:400;">Type/key</div>
<div class="t" style="left:348.4px;top:339.8px;line-height:14px;font-size:9.0px;color:#6e6e6e;font-weight:400;">String[TableId]/Number[Length]</div>
<div class="t" style="left:515.6px;top:321.7px;line-height:14px;font-size:8.6px;color:#333;font-weight:400;">SSDT</div>
<div style="left:509.2px;top:334px;width:433.8px;height:86.3px;background:#d3d3d3;border-radius:3px;box-shadow:inset 0 0 0 1px #cbcbcb"></div>
<div class="cb" style="left:514.4px;top:339.2px;width:7px;height:7px"></div>
<div class="t" style="left:527.6px;top:337.3px;line-height:14px;font-size:8.7px;color:#2b2b2b;font-weight:400;">Double First State</div>
<div class="cb" style="left:611.4px;top:339.2px;width:7px;height:7px"></div>
<div class="t" style="left:624.6px;top:337.3px;line-height:14px;font-size:8.7px;color:#2b2b2b;font-weight:400;">Drop OEM</div>
<div class="cb" style="left:678.4px;top:339.2px;width:7px;height:7px"></div>
<div class="t" style="left:691.6px;top:337.3px;line-height:14px;font-size:8.7px;color:#2b2b2b;font-weight:400;">Use SystemIO</div>
<div class="cb" style="left:759.9px;top:339.2px;width:7px;height:7px"></div>
<div class="t" style="left:773.1px;top:337.3px;line-height:14px;font-size:8.7px;color:#2b2b2b;font-weight:400;">NoOemTableId</div>
<div class="cb" style="left:514.4px;top:353.0px;width:7px;height:7px"></div>
<div class="t" style="left:527.6px;top:351.1px;line-height:14px;font-size:8.7px;color:#2b2b2b;font-weight:400;">NoDynamicExtract</div>
<div class="t" style="left:515px;top:365.5px;line-height:14px;font-size:8.7px;color:#2b2b2b;font-weight:400;">Plugin Type</div>
<div style="left:566.2px;top:366px;width:35.0px;height:13.4px;border-radius:1.5px 3px 3px 1.5px;background:#fff;box-shadow:0 0 0 0.6px #b4b4b4,0 0.5px 0.8px rgba(0,0,0,.2)"></div>
<div style="left:589.2px;top:366px;width:12.0px;height:13.4px;border-radius:0 3px 3px 0;background:linear-gradient(#3aa5fb,#0a79f5)"></div>
<svg style="position:absolute;left:592.2px;top:370.2px" width="6" height="5"><path d="M0.5 1 L3 3.5 L5.5 1" stroke="#f0f6ff" stroke-width="0.9" fill="none"/></svg>
<div class="t" style="left:623px;top:365.5px;line-height:14px;font-size:8.7px;color:#2b2b2b;font-weight:400;">PLimit Dict</div>
<div style="left:673.2px;top:366px;width:35.4px;height:13.4px;border-radius:1.5px 3px 3px 1.5px;background:#fff;box-shadow:0 0 0 0.6px #b4b4b4,0 0.5px 0.8px rgba(0,0,0,.2)"></div>
<div style="left:696.6px;top:366px;width:12.0px;height:13.4px;border-radius:0 3px 3px 0;background:linear-gradient(#3aa5fb,#0a79f5)"></div>
<svg style="position:absolute;left:699.6px;top:370.2px" width="6" height="5"><path d="M0.5 1 L3 3.5 L5.5 1" stroke="#f0f6ff" stroke-width="0.9" fill="none"/></svg>
<div class="t" style="left:722.5px;top:365.5px;line-height:14px;font-size:8.7px;color:#2b2b2b;font-weight:400;">UnderVolt Step</div>
<div style="left:788.75px;top:366.2px;width:39.25px;height:13.3px;border-radius:1.5px 3px 3px 1.5px;background:#fff;box-shadow:0 0 0 0.6px #b4b4b4,0 0.5px 0.8px rgba(0,0,0,.2)"></div>
<div style="left:816px;top:366.2px;width:12px;height:13.3px;border-radius:0 3px 3px 0;background:linear-gradient(#3aa5fb,#0a79f5)"></div>
<svg style="position:absolute;left:819.0px;top:370.35px" width="6" height="5"><path d="M0.5 1 L3 3.5 L5.5 1" stroke="#f0f6ff" stroke-width="0.9" fill="none"/></svg>
<div class="t" style="left:515px;top:385.0px;line-height:14px;font-size:8.7px;color:#2b2b2b;font-weight:400;">Min Multiplier</div>
<div style="left:573.4px;top:384.9px;width:25.4px;height:13.8px;background:#fff;border-radius:0px;box-shadow:inset 0 0 0 1px #bdbdbd"></div>
<div class="t" style="left:611.5px;top:385.0px;line-height:14px;font-size:8.7px;color:#2b2b2b;font-weight:400;">Max Multiplier</div>
<div style="left:673.2px;top:384.9px;width:25.4px;height:13.8px;background:#fff;border-radius:0px;box-shadow:inset 0 0 0 1px #bdbdbd"></div>
<div class="t" style="left:711.25px;top:385.0px;line-height:14px;font-size:8.7px;color:#2b2b2b;font-weight:400;">C3 Latency</div>
<div style="left:763.75px;top:385px;width:63.75px;height:13.75px;background:#fff;border-radius:0px;box-shadow:inset 0 0 0 1px #bdbdbd"></div>
<div class="t" style="left:767px;top:385.0px;line-height:14px;font-size:8.7px;color:#bdbdbd;font-weight:400;">hex or number</div>
<div class="cb" style="left:515.0px;top:406.1px;width:7px;height:7px"></div>
<div class="t" style="left:528.2px;top:404.2px;line-height:14px;font-size:8.7px;color:#2b2b2b;font-weight:400;">EnableC2</div>
<div class="cb" style="left:584.0px;top:406.1px;width:7px;height:7px"></div>
<div class="t" style="left:597.2px;top:404.2px;line-height:14px;font-size:8.7px;color:#2b2b2b;font-weight:400;">EnableC4</div>
<div class="cb" style="left:653.0px;top:406.1px;width:7px;height:7px"></div>
<div class="t" style="left:666.2px;top:404.2px;line-height:14px;font-size:8.7px;color:#2b2b2b;font-weight:400;">EnableC6</div>
<div class="cb" style="left:722.4px;top:406.1px;width:7px;height:7px"></div>
<div class="t" style="left:735.6px;top:404.2px;line-height:14px;font-size:8.7px;color:#2b2b2b;font-weight:400;">EnableC7</div>
<div class="t" style="left:858.75px;top:334.25px;line-height:14px;font-size:8.7px;color:#2b2b2b;font-weight:400;">Generate Options</div>
<div style="left:851.25px;top:347px;width:86.75px;height:66.75px;background:#cacaca;border-radius:3px;"></div>
<div class="cb" style="left:853.15px;top:351.0px;width:7px;height:7px"></div>
<div class="t" style="left:866.35px;top:349.1px;line-height:14px;font-size:8.6px;color:#2b2b2b;font-weight:400;">Generate PStates</div>
<div class="cb" style="left:853.15px;top:363.7px;width:7px;height:7px"></div>
<div class="t" style="left:866.35px;top:361.8px;line-height:14px;font-size:8.6px;color:#2b2b2b;font-weight:400;">Generate CStates</div>
<div class="cb" style="left:853.15px;top:376.4px;width:7px;height:7px"></div>
<div class="t" style="left:866.35px;top:374.5px;line-height:14px;font-size:8.6px;color:#2b2b2b;font-weight:400;">APSN</div>
<div class="cb" style="left:853.15px;top:389.1px;width:7px;height:7px"></div>
<div class="t" style="left:866.35px;top:387.2px;line-height:14px;font-size:8.6px;color:#2b2b2b;font-weight:400;">APLF</div>
<div class="cb" style="left:853.15px;top:401.8px;width:7px;height:7px"></div>
<div class="t" style="left:866.35px;top:399.9px;line-height:14px;font-size:8.6px;color:#2b2b2b;font-weight:400;">PluginType</div>
<div style="left:224.1px;top:428.7px;width:267.3px;height:62.7px;background:#d3d3d3;border-radius:3px;box-shadow:inset 0 0 0 1px #cbcbcb"></div>
<div class="cb" style="left:230.1px;top:432.2px;width:7px;height:7px"></div>
<div class="t" style="left:243.3px;top:430.3px;line-height:14px;font-size:8.4px;color:#2b2b2b;font-weight:400;">Patch APIC</div>
<div class="cb" style="left:292.8px;top:432.2px;width:7px;height:7px"></div>
<div class="t" style="left:306.0px;top:430.3px;line-height:14px;font-size:8.4px;color:#2b2b2b;font-weight:400;">Smart UPS</div>
<div class="cb" style="left:353.4px;top:432.2px;width:7px;height:7px"></div>
<div class="t" style="left:366.6px;top:430.3px;line-height:14px;font-size:8.4px;color:#2b2b2b;font-weight:400;">Halt Enabler</div>
<div class="cb" style="left:419.6px;top:432.2px;width:7px;height:7px"></div>
<div class="t" style="left:432.8px;top:430.3px;line-height:14px;font-size:8.4px;color:#2b2b2b;font-weight:400;">DisableASPM</div>
<div class="cb" style="left:230.1px;top:446.7px;width:7px;height:7px"></div>
<div class="t" style="left:243.3px;top:444.8px;line-height:14px;font-size:8.4px;color:#2b2b2b;font-weight:400;">AutoMerge</div>
<div class="cb" style="left:292.8px;top:446.7px;width:7px;height:7px"></div>
<div class="t" style="left:306.0px;top:444.8px;line-height:14px;font-size:8.4px;color:#2b2b2b;font-weight:400;">FixHeaders</div>
<div class="cb" style="left:353.4px;top:446.7px;width:7px;height:7px"></div>
<div class="t" style="left:366.6px;top:444.8px;line-height:14px;font-size:8.4px;color:#2b2b2b;font-weight:400;">FixMCFG</div>
<div style="left:229.8px;top:459.1px;width:121.4px;height:16.5px;background:#fff;border-radius:0px;box-shadow:inset 0 0 0 1px #bdbdbd"></div>
<div style="left:363.2px;top:459.1px;width:122.5px;height:16.5px;background:#fff;border-radius:0px;box-shadow:inset 0 0 0 1px #bdbdbd"></div>
<div class="t" style="left:140.5px;top:461.1px;width:300px;text-align:center;line-height:14px;font-size:9.5px;color:#b5b5b5;font-weight:400;">0x64</div>
<div class="t" style="left:274.5px;top:461.1px;width:300px;text-align:center;line-height:14px;font-size:9.5px;color:#b5b5b5;font-weight:400;">0xFE</div>
<div class="t" style="left:140.5px;top:473.6px;width:300px;text-align:center;line-height:14px;font-size:8.6px;color:#333;font-weight:400;">Reset Address</div>
<div class="t" style="left:274.5px;top:473.6px;width:300px;text-align:center;line-height:14px;font-size:8.6px;color:#333;font-weight:400;">Reset Value</div>
<div class="t" style="left:516px;top:423.0px;line-height:14px;font-size:8.6px;color:#333;font-weight:400;">DisabledAML</div>
<div style="left:509.2px;top:435.2px;width:209.3px;height:55.7px;background:#d3d3d3;border-radius:3px;box-shadow:inset 0 0 0 1px #cbcbcb"></div>
<div style="left:512px;top:438px;width:192.2px;height:51.3px;background:#fff;border-radius:0px;"></div>
<div style="left:512px;top:450.8px;width:192.2px;height:12.8px;background:#f3f3f3;border-radius:0px;"></div>
<div style="left:512px;top:476.4px;width:192.2px;height:12.8px;background:#f3f3f3;border-radius:0px;"></div>
<div class="t" style="left:741.1px;top:422.9px;line-height:14px;font-size:8.9px;color:#333;font-weight:400;">SortedOrder</div>
<div style="left:734.9px;top:436.1px;width:209.5px;height:55.7px;background:#d3d3d3;border-radius:3px;box-shadow:inset 0 0 0 1px #cbcbcb"></div>
<div style="left:736.8px;top:438.5px;width:192.5px;height:49.7px;background:#fff;border-radius:0px;"></div>
<div style="left:736.8px;top:450.95px;width:192.5px;height:12.45px;background:#f3f3f3;border-radius:0px;"></div>
<div style="left:736.8px;top:475.85px;width:192.5px;height:12.35px;background:#f3f3f3;border-radius:0px;"></div>
<div style="left:913.1px;top:172.15px;width:7.8px;height:1.3px;background:#8e8e8e;border-radius:0px;"></div>
<div style="left:925px;top:172.25px;width:7.9px;height:1.3px;background:#7a7a7a;border-radius:0px;"></div>
<div style="left:928.3px;top:168.95px;width:1.3px;height:7.9px;background:#7a7a7a;border-radius:0px;"></div>
<svg style="position:absolute;left:235.8px;top:171.5px;overflow:visible" width="9.3" height="6.6" viewBox="0 0 10 7"><path d="M0.7 3.6 L2.9 0.9 L8.4 0.8 L9.5 3.4 L8.3 6.4 L3 6.4 Z" fill="#d6d6d6" stroke="#676767" stroke-width="1.15" stroke-linejoin="round"/><path d="M1.9 3.8 L4.6 1.9 L8.2 2.1 L5.4 3.2 L4.9 5.4 Z" fill="#fdfdfd"/><path d="M5.6 3.6 L5.6 5.2 M7 3.4 L7 5" stroke="#9a9a9a" stroke-width="0.6"/></svg>
<div style="left:481px;top:396.55px;width:8.3px;height:1.3px;background:#9a9a9a;border-radius:0px;"></div>
<div style="left:481.2px;top:409.25px;width:8.2px;height:1.3px;background:#7a7a7a;border-radius:0px;"></div>
<div style="left:484.65px;top:405.8px;width:1.3px;height:8.2px;background:#7a7a7a;border-radius:0px;"></div>
<svg style="position:absolute;left:480.5px;top:341.4px;overflow:visible" width="9.5" height="7" viewBox="0 0 10 7"><path d="M0.7 3.6 L2.9 0.9 L8.4 0.8 L9.5 3.4 L8.3 6.4 L3 6.4 Z" fill="#d6d6d6" stroke="#676767" stroke-width="1.15" stroke-linejoin="round"/><path d="M1.9 3.8 L4.6 1.9 L8.2 2.1 L5.4 3.2 L4.9 5.4 Z" fill="#fdfdfd"/><path d="M5.6 3.6 L5.6 5.2 M7 3.4 L7 5" stroke="#9a9a9a" stroke-width="0.6"/></svg>
<div style="left:707.9px;top:470.75px;width:8.3px;height:1.3px;background:#a4a4a4;border-radius:0px;"></div>
<div style="left:707.8px;top:481.95px;width:8.6px;height:1.3px;background:#7a7a7a;border-radius:0px;"></div>
<div style="left:711.45px;top:478.3px;width:1.3px;height:8.6px;background:#7a7a7a;border-radius:0px;"></div>
<svg style="position:absolute;left:707.1px;top:440.8px;overflow:visible" width="9.9" height="7.7" viewBox="0 0 10 7"><path d="M0.7 3.6 L2.9 0.9 L8.4 0.8 L9.5 3.4 L8.3 6.4 L3 6.4 Z" fill="#d6d6d6" stroke="#676767" stroke-width="1.15" stroke-linejoin="round"/><path d="M1.9 3.8 L4.6 1.9 L8.2 2.1 L5.4 3.2 L4.9 5.4 Z" fill="#fdfdfd"/><path d="M5.6 3.6 L5.6 5.2 M7 3.4 L7 5" stroke="#9a9a9a" stroke-width="0.6"/></svg>
<div style="left:932.9px;top:471.45px;width:8.8px;height:1.3px;background:#a4a4a4;border-radius:0px;"></div>
<div style="left:932.9px;top:483.85px;width:8.8px;height:1.3px;background:#7a7a7a;border-radius:0px;"></div>
<div style="left:936.65px;top:480.1px;width:1.3px;height:8.8px;background:#7a7a7a;border-radius:0px;"></div>
<svg style="position:absolute;left:932.2px;top:441.4px;overflow:visible" width="10.1" height="6.9" viewBox="0 0 10 7"><path d="M0.7 3.6 L2.9 0.9 L8.4 0.8 L9.5 3.4 L8.3 6.4 L3 6.4 Z" fill="#d6d6d6" stroke="#676767" stroke-width="1.15" stroke-linejoin="round"/><path d="M1.9 3.8 L4.6 1.9 L8.2 2.1 L5.4 3.2 L4.9 5.4 Z" fill="#fdfdfd"/><path d="M5.6 3.6 L5.6 5.2 M7 3.4 L7 5" stroke="#9a9a9a" stroke-width="0.6"/></svg>
<div style="left:935.3px;top:516.4px;width:10.6px;height:1.1px;background:#9a9a9a;border-radius:0px;"></div>
<div style="left:935.3px;top:518.67px;width:10.6px;height:1.1px;background:#9a9a9a;border-radius:0px;"></div>
<div style="left:935.3px;top:520.94px;width:10.6px;height:1.1px;background:#9a9a9a;border-radius:0px;"></div>
<div style="left:935.3px;top:523.21px;width:10.6px;height:1.1px;background:#9a9a9a;border-radius:0px;"></div></body></html>
